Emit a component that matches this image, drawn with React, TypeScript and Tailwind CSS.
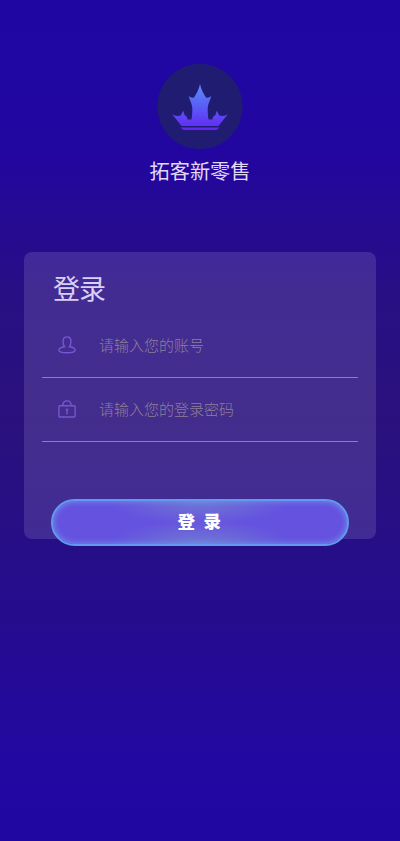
import React, { useState } from 'react';

interface FieldProps {
  icon: React.ReactNode;
  type: string;
  placeholder: string;
  value: string;
  onChange: (value: string) => void;
}

function Logo() {
  return (
    <svg width="86" height="86" viewBox="0 0 86 86" className="block">
      <defs>
        <linearGradient id="crown" x1="0" y1="20" x2="0" y2="66" gradientUnits="userSpaceOnUse">
          <stop offset="0" stopColor="#5b8cf8" />
          <stop offset="0.5" stopColor="#5a5cf5" />
          <stop offset="1" stopColor="#6424f4" />
        </linearGradient>
      </defs>
      <circle cx="43" cy="42.500" r="42.700" fill="#201c72" />
      <path
        fill="url(#crown)"
        d="M43 20C42 25 39.500 30 37 33.500C35 34 33.500 33.500 31.800 32C32.500 36 35 39.500 35.300 44C35.400 48 35 52 34.500 55.500H30.500C30.300 53 29.500 51.700 27.800 51.500L26.200 46.800L23.700 51.500C20.500 52.500 17.500 52 15 50L24.500 62H61.500L71 50C68.500 52 65.500 52.500 62.300 51.500L59.800 46.800L58.200 51.500C56.500 51.700 55.700 53 55.500 55.500H51.500C51 52 50.600 48 50.700 44C51 39.500 53.500 36 54.200 32C52.500 33.500 51 34 49 33.500C46.500 30 44 25 43 20Z"
      />
      <path d="M23.500 63.500H62.500L59.500 66H26.500Z" fill="url(#crown)" />
    </svg>
  );
}

function UserIcon() {
  return (
    <svg width="18" height="18" viewBox="0 0 18 18" fill="none" stroke="#7558d1" strokeWidth="1.400" className="mb-0.5">
      <path d="M6.500 10.800C5.300 9.500 5.100 7.500 5.100 5.200C5.100 2.500 6.700 0.900 9 0.900S12.900 2.500 12.900 5.200C12.900 7.500 12.700 9.500 11.500 10.800C14.800 11.300 17.100 12.500 17.100 14.300C17.100 16 14.500 16.800 9 16.800S0.900 16 0.900 14.300C0.900 12.500 3.200 11.300 6.500 10.800Z" />
    </svg>
  );
}

function LockIcon() {
  return (
    <svg width="18" height="18" viewBox="0 0 18 18" fill="none" stroke="#7558d1" strokeWidth="1.400" className="mb-0.5">
      <rect x="0.900" y="5.700" width="16.200" height="11.300" rx="1" />
      <path d="M4.800 5.700C4.800 2.500 6.200 0.900 9 0.900S13.200 2.500 13.200 5.700" />
      <path d="M9 8.500V14.200M7.800 9.700H10.200" />
    </svg>
  );
}

function Field({ icon, type, placeholder, value, onChange }: FieldProps) {
  return (
    <label className="flex h-16 items-center border-b border-[#8f6ffc] pl-4">
      {icon}
      <input
        type={type}
        value={value}
        placeholder={placeholder}
        onChange={(e) => onChange(e.target.value)}
        className="ml-[23px] min-w-0 flex-1 bg-transparent text-[15px] font-light text-white outline-none placeholder:text-[#8d7f98]"
      />
    </label>
  );
}

function App() {
  const [account, setAccount] = useState('');
  const [password, setPassword] = useState('');

  return (
    <div className="flex min-h-screen flex-col items-center bg-[linear-gradient(180deg,#1f06a4_0%,#2206a0_18%,#280f84_35%,#29117d_50%,#260d8b_70%,#2208a0_90%,#2007a2_100%)] pt-16 font-['Noto_Sans_CJK_SC',sans-serif]">
      <Logo />
      <h1 className="mt-[6px] text-[20.200px] leading-[30px] text-[#e2d8f8]">拓客新零售</h1>

      <form
        onSubmit={(e) => e.preventDefault()}
        className="mt-[66px] flex h-[287px] w-[352px] flex-col rounded-lg bg-white/12 px-[18px] pt-[17px]"
      >
        <h2 className="ml-[11px] text-[27px] leading-[38px] tracking-[-1px] text-[#dacff5]">登录</h2>
        <div className="mt-[7px]">
          <Field icon={<UserIcon />} type="text" placeholder="请输入您的账号" value={account} onChange={setAccount} />
          <Field icon={<LockIcon />} type="password" placeholder="请输入您的登录密码" value={password} onChange={setPassword} />
        </div>
        {/* the button hangs over the bottom edge of the card */}
        <button
          type="submit"
          className="mx-[9px] mt-[57px] h-[47px] shrink-0 rounded-full border-2 border-[#629af0] bg-[#6552df] bg-[radial-gradient(ellipse_90px_24px_at_50%_0%,#7078d3,transparent),radial-gradient(ellipse_90px_24px_at_50%_100%,#7078d3,transparent)] pb-[2px] text-[17.500px] font-black text-white shadow-[inset_0_0_6px_#6c9cec]"
        >
          <span className="pl-[7px] tracking-[8.500px]">登录</span>
        </button>
      </form>
    </div>
  );
}

export default App;
